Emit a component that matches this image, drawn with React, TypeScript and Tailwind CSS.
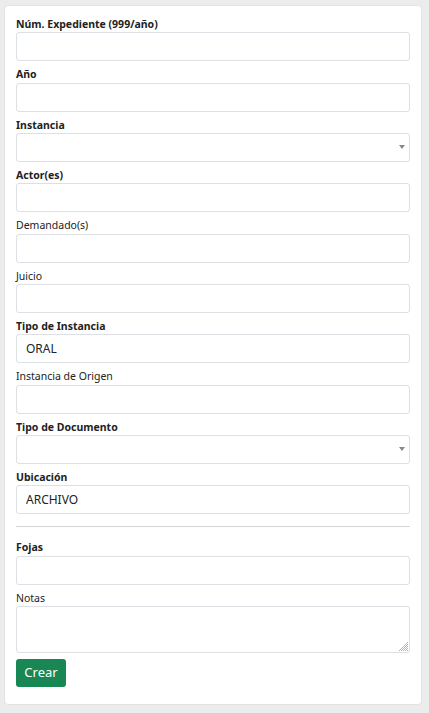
import { ChangeEvent, useState } from 'react';

type Field = {
  label: string;
  bold?: boolean;
  kind?: 'input' | 'select';
  value?: string;
};

const fields: Field[] = [
  { label: 'Núm. Expediente (999/año)', bold: true },
  { label: 'Año', bold: true },
  { label: 'Instancia', bold: true, kind: 'select' },
  { label: 'Actor(es)', bold: true },
  { label: 'Demandado(s)' },
  { label: 'Juicio' },
  { label: 'Tipo de Instancia', bold: true, value: 'ORAL' },
  { label: 'Instancia de Origen' },
  { label: 'Tipo de Documento', bold: true, kind: 'select' },
  { label: 'Ubicación', bold: true, value: 'ARCHIVO' },
];

const inputClass =
  'w-full h-[29px] rounded-[3px] border border-[#dcdfe3] bg-white px-[9px] text-[12px] text-[#222] outline-none';

const labelClass = 'block h-[16.33px] leading-[16.33px] text-[10.5px] text-[#222]';

const FormField = ({ field }: { field: Field }) => {
  const [value, setValue] = useState(field.value ?? '');

  return (
    <div className="mb-[5px]">
      <label className={`${labelClass} ${field.bold ? 'font-bold' : 'font-normal'}`}>
        {field.label}
      </label>
      {field.kind === 'select' ? (
        <div className="relative">
          <div className={inputClass} />
          <span className="absolute right-[5px] top-[12px] h-0 w-0 border-x-[3px] border-t-[4px] border-x-transparent border-t-[#888]" />
        </div>
      ) : (
        <input
          type="text"
          value={value}
          onChange={(e: ChangeEvent<HTMLInputElement>) => setValue(e.target.value)}
          className={inputClass}
        />
      )}
    </div>
  );
};

export default function App() {
  const [fojas, setFojas] = useState('');
  const [notas, setNotas] = useState('');

  return (
    <div className="min-h-screen bg-[#ececec] pt-[5px] pl-[4px] font-['Noto_Sans','Open_Sans',sans-serif]">
      <div className="w-[418px] rounded-[4px] border border-[#e3e3e3] bg-white px-[11px] pt-[10px] pb-[17px]">
        {fields.map((field) => (
          <FormField key={field.label} field={field} />
        ))}

        <hr className="mt-[12px] mb-[12px] border-t border-[#d6d6d6]" />

        <div className="mb-[5px]">
          <label className={`${labelClass} font-bold`}>Fojas</label>
          <input
            type="text"
            value={fojas}
            onChange={(e) => setFojas(e.target.value)}
            className={inputClass}
          />
        </div>

        <div className="mb-[6px]">
          <label className={labelClass}>Notas</label>
          <div className="relative">
            <textarea
              value={notas}
              onChange={(e) => setNotas(e.target.value)}
              className="block w-full h-[47px] resize-none rounded-[3px] border border-[#dcdfe3] bg-white px-[9px] py-1 text-[12px] outline-none"
            />
            {/* resize grip */}
            <svg className="absolute right-[2px] bottom-[2px]" width="9" height="9" viewBox="0 0 9 9">
              <path d="M9 0L0 9M9 2L2 9M9 4L4 9M9 6L6 9M9 8L8 9" stroke="#b4b4b4" strokeWidth="1" />
            </svg>
          </div>
        </div>

        <button className="h-[28px] w-[50px] rounded-[3px] bg-[#198754] text-[13px] text-white">
          Crear
        </button>
      </div>
    </div>
  );
}
